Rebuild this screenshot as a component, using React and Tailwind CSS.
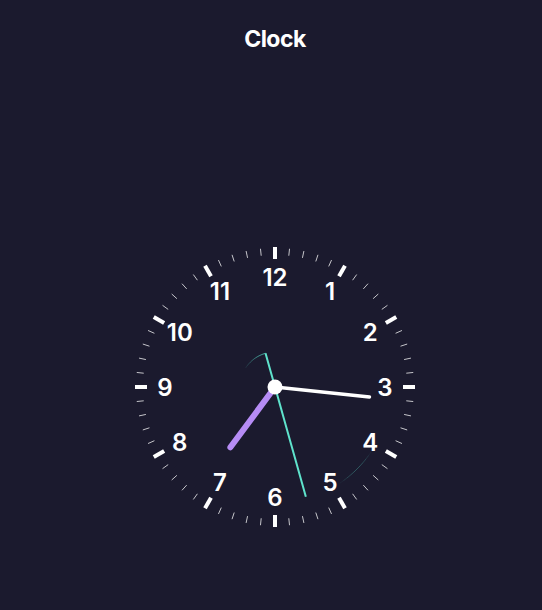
import React from "react";

const C = 150;
const rad = (deg) => ((deg - 90) * Math.PI) / 180;
const pt = (deg, r) => [C + r * Math.cos(rad(deg)), C + r * Math.sin(rad(deg))];

function arcSegments(start, end, r, n, opFn) {
  const segs = [];
  const step = (end - start) / n;
  for (let i = 0; i < n; i++) {
    const a0 = start + i * step;
    const a1 = a0 + step;
    const [x0, y0] = pt(a0, r);
    const [x1, y1] = pt(a1, r);
    segs.push(
      <path
        key={i}
        d={`M ${x0} ${y0} A ${r} ${r} 0 0 1 ${x1} ${y1}`}
        stroke="#5eead4"
        strokeWidth="1"
        fill="none"
        opacity={opFn(i / (n - 1))}
      />
    );
  }
  return segs;
}

function Clock() {
  const ticks = [];
  for (let i = 0; i < 60; i++) {
    const deg = i * 6;
    const major = i % 5 === 0;
    const [x1, y1] = pt(deg, major ? 128 : 132);
    const [x2, y2] = pt(deg, major ? 140 : 139);
    ticks.push(
      <line
        key={i}
        x1={x1}
        y1={y1}
        x2={x2}
        y2={y2}
        stroke="#ffffff"
        strokeWidth={major ? 4 : 1}
        opacity={major ? 1 : 0.75}
      />
    );
  }
  const nums = [];
  for (let h = 1; h <= 12; h++) {
    const [x, y] = pt(h * 30, 110);
    nums.push(
      <text
        key={h}
        x={x}
        y={y}
        textAnchor="middle"
        dominantBaseline="central"
        fill="#ffffff"
        fontSize="24"
        fontWeight="600"
        fontFamily="Inter, 'Noto Sans', sans-serif"
      >
        {h}
      </text>
    );
  }
  const hourDeg = 216.5;
  const minDeg = 96;
  const secDeg = 164.3;
  const [hx, hy] = pt(hourDeg, 75);
  const [mx, my] = pt(minDeg, 95);
  const [sx, sy] = pt(secDeg, 114);
  const [tx, ty] = pt(secDeg + 180, 35);

  return (
    <svg width="300" height="300" viewBox="0 0 300 300">
      {ticks}
      {nums}
      {arcSegments(124, 146, 116, 10, (t) => 0.25 * Math.sin(Math.PI * t) + 0.05)}
      {arcSegments(303, 344.3, 35, 12, (t) => 0.1 + 0.7 * t)}
      <line x1={C} y1={C} x2={hx} y2={hy} stroke="#b68cf5" strokeWidth="6" strokeLinecap="round" />
      <line x1={C} y1={C} x2={mx} y2={my} stroke="#ffffff" strokeWidth="3.5" strokeLinecap="round" />
      <line x1={tx} y1={ty} x2={sx} y2={sy} stroke="#5fe3cc" strokeWidth="2" />
      <circle cx={C} cy={C} r="7.5" fill="#ffffff" />
    </svg>
  );
}

export default function App() {
  return (
    <div className="min-h-[610px] w-full bg-[#1b1a2e] flex flex-col items-center pl-2">
      <h1 className="pt-[23px] text-[23px] leading-8 font-bold text-white tracking-[-0.5px] font-['Inter','Noto_Sans',sans-serif]">
        Clock
      </h1>
      <div className="mt-[182px]">
        <Clock />
      </div>
    </div>
  );
}
